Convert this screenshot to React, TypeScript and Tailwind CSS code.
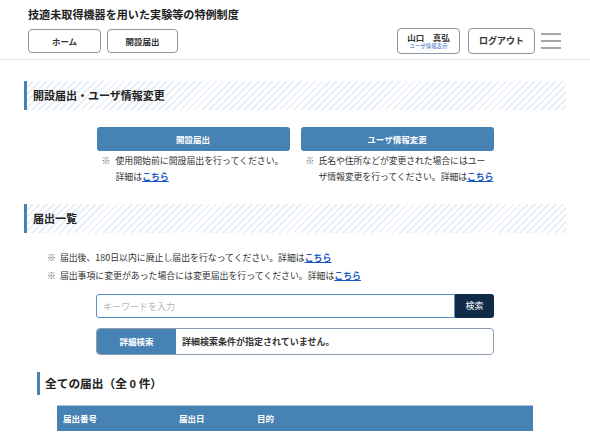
const font = "font-['Noto_Sans_CJK_JP','Noto_Sans',sans-serif]";

function SectionHeading({ title }: { title: string }) {
  return (
    <div className="mx-6 flex h-[29px] items-center border-l-[3px] border-[#4682b4] bg-[repeating-linear-gradient(135deg,#ffffff_0px,#ffffff_3px,#eaf0f7_3px,#eaf0f7_5px)] pl-[6px]">
      <h2 className="text-[11px] font-bold text-[#222]">{title}</h2>
    </div>
  );
}

function Kochira() {
  return <a className="font-bold text-[#1a56c8] underline">こちら</a>;
}

export default function App() {
  return (
    <div className={`${font} min-h-[442px] w-[590px] bg-white text-[#333]`}>
      <header className="border-b border-[#e8e8e8] px-7 pb-[5px] pt-[6px]">
        <h1 className="text-[11.1px] leading-[16px] font-bold text-[#222]">
          技適未取得機器を用いた実験等の特例制度
        </h1>
        <div className="mt-[6px] flex items-center">
          <button className="flex h-[24px] w-[73px] items-center justify-center rounded-[4px] border border-[#8a96a3] text-[8.5px] font-bold text-[#333]">
            ホーム
          </button>
          <button className="ml-[6px] flex h-[24px] w-[71px] items-center justify-center rounded-[4px] border border-[#8a96a3] text-[8.5px] font-bold text-[#333]">
            開設届出
          </button>
          <div className="flex-1" />
          <button className="flex h-[26px] w-[63px] flex-col items-center justify-center rounded-[4px] border border-[#8a96a3] leading-none">
            <span className="text-[8.5px] font-bold text-[#333]">山口　真弘</span>
            <span className="mt-[2px] text-[5.5px] text-[#3a6fc4]">ユーザ情報表示</span>
          </button>
          <button className="ml-[8px] flex h-[26px] w-[67px] items-center justify-center rounded-[4px] border border-[#8a96a3] text-[9px] font-bold text-[#333]">
            ログアウト
          </button>
          <div className="ml-[6px] mr-[1px] flex w-[20px] flex-col gap-[5px]">
            <span className="h-[2px] bg-[#a6a6a6]" />
            <span className="h-[2px] bg-[#a6a6a6]" />
            <span className="h-[2px] bg-[#a6a6a6]" />
          </div>
        </div>
      </header>

      <main className="pt-[21px]">
        <SectionHeading title="開設届出・ユーザ情報変更" />

        <div className="mx-auto mt-[17px] grid w-[397px] grid-cols-2 gap-x-[11px]">
          <div>
            <button className="flex h-[24px] w-full items-center justify-center rounded-[3px] bg-[#4682b4] text-[8.5px] font-bold text-white">
              開設届出
            </button>
            <div className="mt-[2px] flex pl-[5px] text-[8.9px] leading-[16px] text-[#333]">
              <span className="w-[14px] shrink-0 text-[#666]">※</span>
              <span>
                使用開始前に開設届出を行ってください。
                <br />
                詳細は<Kochira />
              </span>
            </div>
          </div>
          <div>
            <button className="flex h-[24px] w-full items-center justify-center rounded-[3px] bg-[#4682b4] text-[8.5px] font-bold text-white">
              ユーザ情報変更
            </button>
            <div className="mt-[2px] flex pl-[5px] text-[8.9px] leading-[16px] tracking-[-0.1px] text-[#333]">
              <span className="w-[13px] shrink-0 text-[#666]">※</span>
              <span>
                氏名や住所などが変更された場合にはユー
                <br />
                ザ情報変更を行ってください。詳細は<Kochira />
              </span>
            </div>
          </div>
        </div>

        <div className="mt-[19px]">
          <SectionHeading title="届出一覧" />
        </div>

        <div className="mt-[17px] space-y-[2px] pl-[47px] text-[8.9px] leading-[16px] text-[#333]">
          <p>
            <span className="mr-[4px] text-[#666]">※</span>
            届出後、180日以内に廃止し届出を行なってください。詳細は<Kochira />
          </p>
          <p>
            <span className="mr-[4px] text-[#666]">※</span>
            届出事項に変更があった場合には変更届出を行ってください。詳細は<Kochira />
          </p>
        </div>

        <div className="mx-auto mt-[10px] flex h-[24px] w-[398px]">
          <input
            className="h-full flex-1 rounded-l-[3px] border border-[#5b8fc2] px-[6px] text-[9px] outline-none placeholder:text-[#b5b5b5]"
            placeholder="キーワードを入力"
          />
          <button className="flex h-full w-[39px] items-center justify-center rounded-r-[3px] bg-[#0f2b47] text-[9px] text-white">
            検索
          </button>
        </div>

        <div className="mx-auto mt-[10px] flex h-[27px] w-[398px] overflow-hidden rounded-[4px] border border-[#8c9db0]">
          <div className="flex w-[79px] items-center justify-center bg-[#4682b4] text-[8.5px] font-bold text-white">
            詳細検索
          </div>
          <div className="flex items-center pl-[6px] text-[9px] font-bold text-[#333]">
            詳細検索条件が指定されていません。
          </div>
        </div>

        <div className="ml-[37px] mt-[17px] flex h-[23px] items-center border-l-[3px] border-[#4682b4] pl-[5px]">
          <h3 className="text-[11.7px] font-bold text-[#222]">
            全ての届出（全 <span className="font-['Liberation_Sans',sans-serif]">0</span> 件）
          </h3>
        </div>

        <div className="ml-[57px] mt-[10px] flex h-[26px] w-[476px] items-center border-t border-[#a9c4de] bg-[#4682b4] text-[8.5px] font-bold text-white">
          <span className="w-[122px] pl-[6px]">届出番号</span>
          <span className="w-[78px]">届出日</span>
          <span>目的</span>
        </div>
      </main>
    </div>
  );
}
